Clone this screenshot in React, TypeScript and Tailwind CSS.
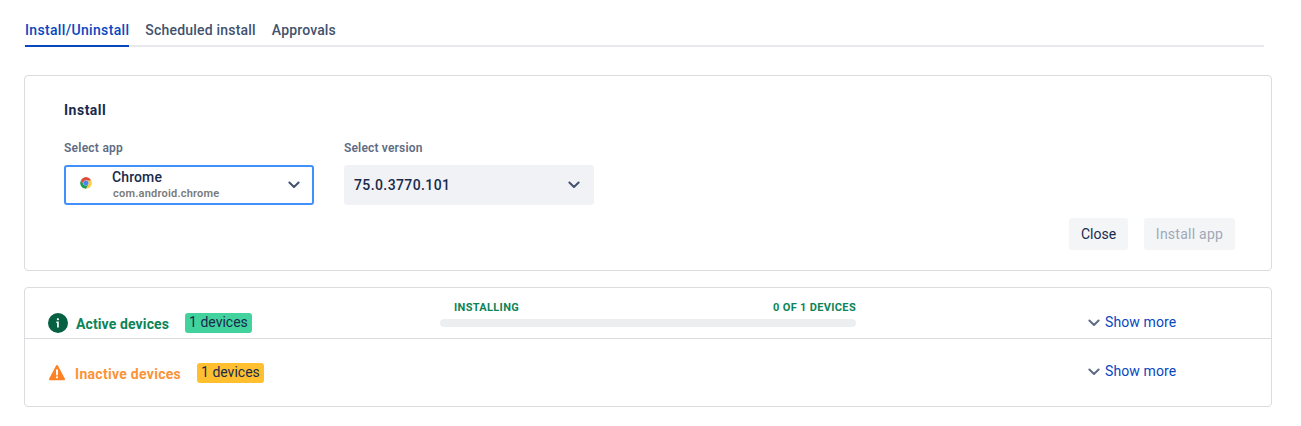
type IconProps = { className?: string };

function Chevron({ className = "" }: IconProps) {
  return (
    <svg viewBox="0 0 12 8" className={`block h-2 w-3 ${className}`} fill="none" stroke="currentColor" strokeWidth="2" strokeLinecap="round" strokeLinejoin="round">
      <path d="M1.4 1.5 6 6l4.600-4.500" />
    </svg>
  );
}

function ChromeLogo() {
  return (
    <svg viewBox="0 0 48 48" className="mb-1 block size-3">
      <path d="M24 24 4.080 12.500A23 23 0 0 1 43.920 12.500Z" fill="#dd4b3e" />
      <path d="M24 12.500H43.920A23 23 0 0 1 24 47L33.500 29.500Z" fill="#fdce42" />
      <path d="M4.080 12.500A23 23 0 0 0 24 47L33.500 29.500 24 24 14.500 29.500Z" fill="#1b9c57" />
      <path d="M4.080 12.500A23 23 0 0 1 43.920 12.500H24L14.500 29.500Z" fill="#dd4b3e" />
      <circle cx="24" cy="24" r="11" fill="#b9cdf3" />
      <circle cx="24" cy="24" r="9.500" fill="#4a84ee" />
    </svg>
  );
}

function InfoIcon() {
  return (
    <svg viewBox="0 0 20 20" className="block size-5">
      <circle cx="10" cy="10" r="10" fill="#056141" />
      <rect x="8.900" y="5.200" width="2" height="2" rx=".6" fill="#fff" />
      <path d="M8.300 8.600h2.500v6H9.100v-4.700h-.8z" fill="#fff" />
    </svg>
  );
}

function WarningIcon() {
  return (
    <svg viewBox="0 0 18 17" className="mt-px block h-[17px] w-[18px]">
      <path d="M9 2 16 15.300H2Z" fill="#fe8224" stroke="#fe8224" strokeWidth="2" strokeLinejoin="round" />
      <path d="M9 6.200v4.200" stroke="#fff" strokeWidth="2" strokeLinecap="round" />
      <circle cx="9" cy="13.300" r="1.100" fill="#fff" />
    </svg>
  );
}

function ShowMore({ className = "" }: IconProps) {
  return (
    <button className={`flex h-5 items-center text-[#0747c0] ${className}`}>
      <Chevron className="mt-0.5 text-[#5e6c84]" />
      <span className="ml-[5px] whitespace-nowrap tracking-[0.1px]">Show more</span>
    </button>
  );
}

export default function App() {
  return (
    <main className="h-[426px] w-[1301px] overflow-hidden bg-white px-6 pt-[19px] font-['Roboto',sans-serif] text-sm text-[#172b4d]">
      <nav className="ml-px flex h-7 w-[1239px] gap-4 border-b-2 border-[#e8e9ed] font-medium text-[#42526e]">
        <span className="h-7 border-b-2 border-[#0747c0] leading-[23px] tracking-[0.335px] text-[#0747c0]">Install/Uninstall</span>
        <span className="leading-[23px] tracking-[0.2px]">Scheduled install</span>
        <span className="leading-[23px] tracking-[0.16px]">Approvals</span>
      </nav>

      <section className="mt-7 flex h-[196px] w-[1248px] flex-col rounded border border-[#dcdce0] pr-9 pl-[39px]">
        <h2 className="mt-6 h-5 font-bold leading-5 tracking-[0.5px]">Install</h2>
        <div className="mt-5 flex gap-[30px]">
          <div className="w-[250px]">
            <div className="h-4 text-xs font-semibold leading-4 tracking-[0.25px] text-[#5e6c84]">Select app</div>
            <div className="mt-[9px] flex h-10 items-center rounded-[3px] border-2 border-[#4290fb] pr-3 pl-3.5">
              <ChromeLogo />
              <div className="ml-5 flex-1">
                <div className="h-4 font-medium leading-4 tracking-[0.12px]">Chrome</div>
                <div className="ml-px h-4 text-[11px] font-semibold leading-[18px] tracking-[0.22px] text-[#7a7a7a]">com.android.chrome</div>
              </div>
              <Chevron className="text-[#42526e]" />
            </div>
          </div>
          <div className="w-[250px]">
            <div className="h-4 text-xs font-semibold leading-4 tracking-[0.17px] text-[#5e6c84]">Select version</div>
            <div className="mt-[9px] flex h-10 items-center justify-between rounded-[3px] bg-[#f1f2f6] pr-3.5 pl-2.5 font-medium">
              <span className="tracking-[0.4px]">75.0.3770.101</span>
              <Chevron className="text-[#42526e]" />
            </div>
          </div>
        </div>
        <div className="mt-[13px] flex justify-end gap-4">
          <button className="h-8 w-[59px] rounded-[3px] bg-[#f4f5f7]">Close</button>
          <button className="h-8 w-[91px] rounded-[3px] bg-[#f4f5f7] tracking-[0.25px] text-[#a0a9b8]">Install app</button>
        </div>
      </section>

      <section className="mt-4 h-[120px] w-[1248px] rounded border border-[#dcdce0]">
        <div className="flex h-[51px] border-b border-[#dcdce0] pl-[23px]">
          <div className="flex w-[392px] pt-[25px]">
            <InfoIcon />
            <span className="ml-2 h-5 font-bold leading-[22px] tracking-[0.12px] text-[#0b8457]">Active devices</span>
            <span className="ml-4 h-5 rounded-[3px] bg-[#42d29d] px-1 leading-[18px]">1 devices</span>
          </div>
          <div className="w-[416px] pt-3">
            <div className="flex h-4 justify-between pl-3.5 text-[11px] font-bold leading-[15px] tracking-[0.33px] text-[#0b8457]">
              <span>INSTALLING</span>
              <span>0 OF 1 DEVICES</span>
            </div>
            <div className="mt-[3px] h-2 rounded-full bg-[#edeef0]" />
          </div>
          <ShowMore className="mt-6 ml-[232px]" />
        </div>
        <div className="flex h-[67px] pl-[23px]">
          <div className="flex w-[1040px] pt-6">
            <WarningIcon />
            <span className="ml-[9px] h-5 font-bold leading-[22px] tracking-[0.29px] text-[#fb9337]">Inactive devices</span>
            <span className="ml-4 h-5 rounded-[3px] bg-[#ffbf2f] px-1 leading-[18px]">1 devices</span>
          </div>
          <ShowMore className="mt-[22px]" />
        </div>
      </section>
    </main>
  );
}
